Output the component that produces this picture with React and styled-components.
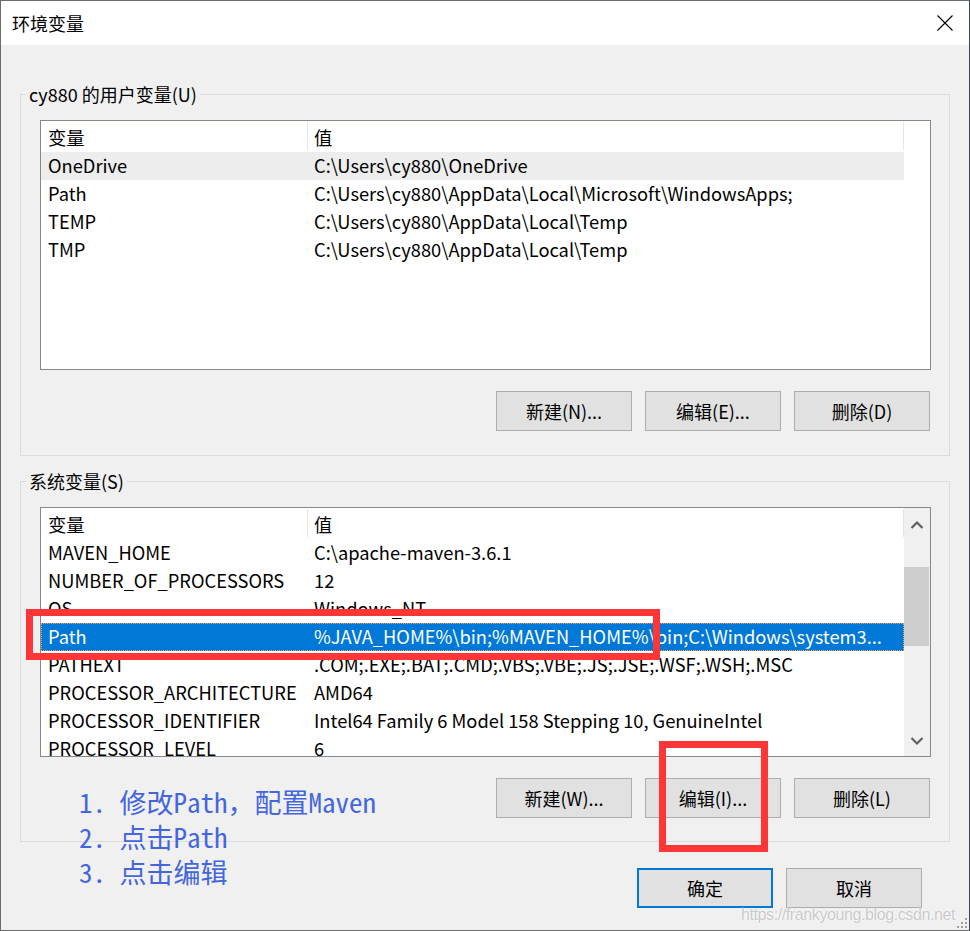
import styled, { createGlobalStyle } from 'styled-components';

const GlobalStyle = createGlobalStyle`
  html, body { margin: 0; padding: 0; background: #f0f0f0; }
  * { box-sizing: border-box; }
`;

const UI_FONT = `"Noto Sans CJK SC", "Noto Sans", sans-serif`;

const userVars = [
  { name: 'OneDrive', value: 'C:\\Users\\cy880\\OneDrive', hover: true },
  { name: 'Path', value: 'C:\\Users\\cy880\\AppData\\Local\\Microsoft\\WindowsApps;' },
  { name: 'TEMP', value: 'C:\\Users\\cy880\\AppData\\Local\\Temp' },
  { name: 'TMP', value: 'C:\\Users\\cy880\\AppData\\Local\\Temp' },
];

const systemVars = [
  { name: 'MAVEN_HOME', value: 'C:\\apache-maven-3.6.1' },
  { name: 'NUMBER_OF_PROCESSORS', value: '12' },
  { name: 'OS', value: 'Windows_NT' },
  { name: 'Path', value: '%JAVA_HOME%\\bin;%MAVEN_HOME%\\bin;C:\\Windows\\system3...', selected: true },
  { name: 'PATHEXT', value: '.COM;.EXE;.BAT;.CMD;.VBS;.VBE;.JS;.JSE;.WSF;.WSH;.MSC' },
  { name: 'PROCESSOR_ARCHITECTURE', value: 'AMD64' },
  { name: 'PROCESSOR_IDENTIFIER', value: 'Intel64 Family 6 Model 158 Stepping 10, GenuineIntel' },
  { name: 'PROCESSOR_LEVEL', value: '6' },
];

export default function App() {
  return (
    <>
      <GlobalStyle />
      <Window>
        <TitleBar>
          <Title>环境变量</Title>
          <CloseIcon width="16" height="16" viewBox="0 0 16 16">
            <path d="M0.5 0.5 L15.5 15.5 M15.5 0.5 L0.5 15.5" stroke="#000" strokeWidth="1.1" fill="none" />
          </CloseIcon>
        </TitleBar>

        <Body>
          <Group>
            <Legend>cy880 的用户变量(U)</Legend>
            <VarList>
              <Table>
                <HeaderRow>
                  <HeadCell>变量</HeadCell>
                  <HeadCell>值</HeadCell>
                </HeaderRow>
                {userVars.map(v => (
                  <Row key={v.name} hover={v.hover}>
                    <Cell>{v.name}</Cell>
                    <Cell>{v.value}</Cell>
                  </Row>
                ))}
              </Table>
            </VarList>
            <ButtonRow>
              <Button>新建(N)...</Button>
              <Button>编辑(E)...</Button>
              <Button>删除(D)</Button>
            </ButtonRow>
          </Group>

          <Group second>
            <Legend>系统变量(S)</Legend>
            <VarList>
              <Table>
                <HeaderRow>
                  <HeadCell>变量</HeadCell>
                  <HeadCell>值</HeadCell>
                </HeaderRow>
                {systemVars.map(v => (
                  <Row key={v.name} selected={v.selected}>
                    <Cell>{v.name}</Cell>
                    <Cell>{v.value}</Cell>
                  </Row>
                ))}
              </Table>
              <Scrollbar>
                <Arrow width="14" height="10" viewBox="0 0 14 10">
                  <path d="M1.5 8 L7 2.5 L12.5 8" stroke="#606060" strokeWidth="2.2" fill="none" />
                </Arrow>
                <Track>
                  <Thumb />
                </Track>
                <Arrow width="14" height="10" viewBox="0 0 14 10">
                  <path d="M1.5 2 L7 7.5 L12.5 2" stroke="#606060" strokeWidth="2.2" fill="none" />
                </Arrow>
              </Scrollbar>
            </VarList>
            <ButtonRow>
              <Button>新建(W)...</Button>
              <Button>编辑(I)...</Button>
              <Button>删除(L)</Button>
            </ButtonRow>
          </Group>

          <Footer>
            <Button primary>确定</Button>
            <Button>取消</Button>
          </Footer>
        </Body>

        <Annotation>
          <p>1. 修改Path，配置Maven</p>
          <p>2. 点击Path</p>
          <p>3. 点击编辑</p>
        </Annotation>

        <RedBox style={{ left: 25, top: 608, width: 634, height: 51 }} />
        <RedBox style={{ left: 658, top: 740, width: 109, height: 111 }} />

        <Watermark>https://frankyoung.blog.csdn.net</Watermark>
        <Grip width="12" height="12" viewBox="0 0 12 12">
          <g fill="#a0a0a0">
            <rect x="9" y="1" width="2" height="2" />
            <rect x="5" y="5" width="2" height="2" />
            <rect x="9" y="5" width="2" height="2" />
            <rect x="1" y="9" width="2" height="2" />
            <rect x="5" y="9" width="2" height="2" />
            <rect x="9" y="9" width="2" height="2" />
          </g>
        </Grip>
      </Window>
    </>
  );
}

const Window = styled.div`
  position: relative;
  width: 970px;
  height: 931px;
  border: 1px solid #6b6b6b;
  border-right-color: #3a4a5a;
  background: #f0f0f0;
  font-family: ${UI_FONT};
  color: #000;
  overflow: hidden;
`;

const TitleBar = styled.div`
  height: 44px;
  background: #ffffff;
  display: flex;
  align-items: center;
  justify-content: space-between;
  padding: 0 16px 0 11px;
`;

const Title = styled.div`
  font-size: 18px;
  line-height: 24px;
`;

const CloseIcon = styled.svg`
  display: block;
`;

const Body = styled.div`
  display: flex;
  flex-direction: column;
  padding: 37px 19px 0 19px;
`;

const Group = styled.fieldset`
  margin: ${props => props.second ? '13px' : '0'} 0 0 0;
  padding: 14px 18px ${props => props.second ? '23px' : '24px'} 19px;
  border: 1px solid #dcdcdc;
  min-width: 0;
`;

const Legend = styled.legend`
  margin-left: -14px;
  padding: 0 3px;
  font-size: 18px;
  line-height: 24px;
`;

const VarList = styled.div`
  display: flex;
  height: 250px;
  border: 1px solid #828790;
  background: #ffffff;
  overflow: hidden;
`;

const Table = styled.div`
  width: 863px;
  flex: none;
  font-size: 18.3px;
`;

const HeaderRow = styled.div`
  display: grid;
  grid-template-columns: 267px 1fr;
  height: 31px;
  align-items: center;
`;

const HeadCell = styled.div`
  position: relative;
  height: 100%;
  display: flex;
  align-items: center;
  padding-left: 7px;
  line-height: 28px;

  &::after {
    content: '';
    position: absolute;
    right: 0;
    top: 1px;
    bottom: 2px;
    width: 1px;
    background: #e5e5e5;
  }

  & + & {
    padding-left: 6px;
  }
`;

const Row = styled.div`
  display: grid;
  grid-template-columns: 267px 1fr;
  height: 28px;
  line-height: 27px;
  background: ${props => props.selected ? '#0078d7' : props.hover ? '#ededed' : 'transparent'};
  color: ${props => props.selected ? '#ffffff' : '#000000'};
  outline: ${props => props.selected ? '1px dotted #f2a24a' : 'none'};
  outline-offset: -1px;
  white-space: nowrap;
`;

const Cell = styled.div`
  padding-left: 7px;
  overflow: hidden;

  & + & {
    padding-left: 6px;
  }
`;

const Scrollbar = styled.div`
  flex: 1;
  display: flex;
  flex-direction: column;
  align-items: center;
  background: #f0f0f0;
  padding: 12px 0 10px;
`;

const Arrow = styled.svg`
  display: block;
  flex: none;
`;

const Track = styled.div`
  flex: 1;
  width: 100%;
  padding-top: 37px;
`;

const Thumb = styled.div`
  height: 79px;
  margin-right: 1px;
  background: #cdcdcd;
`;

const ButtonRow = styled.div`
  display: flex;
  justify-content: flex-end;
  gap: 13px;
  margin-top: 21px;
  padding-right: 1px;
`;

const Button = styled.button`
  width: 136px;
  height: 40px;
  padding: 0;
  background: #e1e1e1;
  border: ${props => props.primary ? '2px solid #0078d7' : '1px solid #adadad'};
  font-family: ${UI_FONT};
  font-size: 18px;
  color: #000;
`;

const Footer = styled.div`
  display: flex;
  justify-content: flex-end;
  gap: 13px;
  margin-top: 26px;
  padding-right: 28px;
`;

const Annotation = styled.div`
  position: absolute;
  left: 78px;
  top: 783px;
  color: #4466dd;
  font-family: "Noto Sans Mono CJK SC", "Liberation Mono", "Noto Sans CJK SC", monospace;
  font-size: 27px;
  line-height: 35px;
  white-space: pre;

  p {
    margin: 0;
  }
`;

const RedBox = styled.div`
  position: absolute;
  border: 7px solid #ff3636;
`;

const Watermark = styled.div`
  position: absolute;
  right: 14px;
  bottom: 6px;
  font-family: "Liberation Sans", Arial, sans-serif;
  font-size: 16px;
  letter-spacing: -0.4px;
  color: rgba(190, 190, 190, 0.85);
  text-shadow: 0 0 2px #ffffff, 0 0 1px #ffffff;
`;

const Grip = styled.svg`
  position: absolute;
  right: 1px;
  bottom: 1px;
`;
